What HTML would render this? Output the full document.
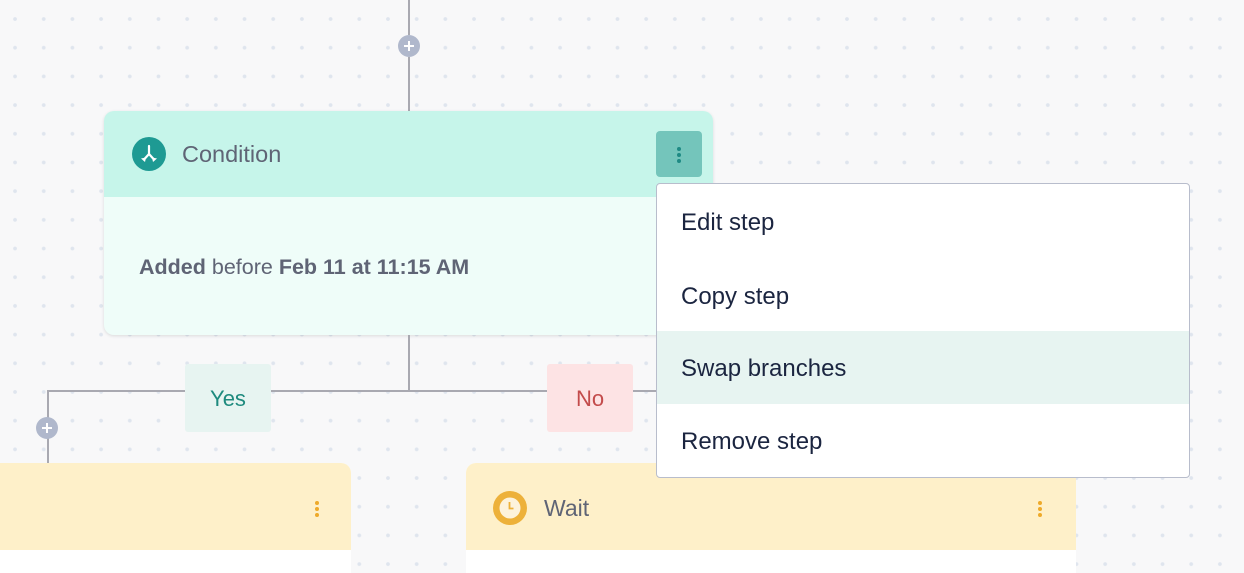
<!DOCTYPE html>
<html><head><meta charset="utf-8"><style>
body{margin:0;width:1244px;height:566px;overflow:hidden;position:relative;font-family:"Liberation Sans",sans-serif;
background-color:#f8f8f9;background-image:radial-gradient(circle,#dfe5ee 1.6px,transparent 2.2px);background-size:28.7px 28.7px;background-position:0.7px 4.7px;}
.a{position:absolute;box-sizing:border-box}
.ln{position:absolute;background:#a9a9b1}
.pl{position:absolute;width:22px;height:22px;border-radius:50%;background:#b0b8cc}
.pl:before{content:"";position:absolute;left:6px;top:10px;width:10px;height:2px;background:#fff}
.pl:after{content:"";position:absolute;left:10px;top:6px;width:2px;height:10px;background:#fff}
</style></head><body>
<div class="ln" style="left:408px;top:0;width:1.5px;height:35px"></div>
<div class="ln" style="left:408px;top:57px;width:1.5px;height:55px"></div>
<div class="pl" style="left:398px;top:35px"></div>

<div class="a" style="left:104px;top:111px;width:609px;height:224px;border-radius:10px;background:#effdf9;box-shadow:0 1px 3px rgba(0,0,0,.12);overflow:hidden">
 <div class="a" style="left:0;top:0;width:100%;height:86px;background:#c6f5ea"></div>
 <svg class="a" style="left:28px;top:26px" width="34" height="34" viewBox="0 0 34 34"><circle cx="17" cy="17" r="17" fill="#1e9a93"/><path d="M17 9v8M17 17l-5 5.5M17 17l5 5.5" stroke="#fff" stroke-width="2.2" fill="none" stroke-linecap="round"/><path d="M9 21.5l4 3.5 1-4.5zM25 21.5l-4 3.5-1-4.5z" fill="#fff"/></svg>
 <div class="a" style="left:78px;top:30px;font-size:23.5px;color:#5f6475">Condition</div>
 <div class="a" style="left:552px;top:20px;width:46px;height:46px;border-radius:4px;background:#74c5bb"></div>
 <div class="a" style="left:573px;top:36px;width:4px;height:4px;border-radius:50%;background:#1e8a84;box-shadow:0 6px 0 #1e8a84,0 12px 0 #1e8a84"></div>
 <div class="a" style="left:35px;top:144px;font-size:21.5px;color:#5f6475"><b>Added</b> before <b>Feb 11 at 11:15 AM</b></div>
</div>

<div class="ln" style="left:408px;top:335px;width:1.5px;height:56px"></div>
<div class="ln" style="left:47px;top:390px;width:610px;height:1.5px;border-radius:0"></div>
<div class="ln" style="left:47px;top:390px;width:1.5px;height:28px"></div>
<div class="ln" style="left:47px;top:438px;width:1.5px;height:26px"></div>
<div class="pl" style="left:36px;top:417px"></div>
<div class="a" style="left:185px;top:364px;width:86px;height:68px;border-radius:3px;background:#e7f4f1;color:#1e8a7e;font-size:22px;line-height:70px;text-align:center">Yes</div>
<div class="a" style="left:547px;top:364px;width:86px;height:68px;border-radius:3px;background:#fde3e4;color:#c34b4b;font-size:22px;line-height:70px;text-align:center">No</div>

<div class="a" style="left:0;top:463px;width:351px;height:110px;border-radius:0 10px 0 0;background:#fff;overflow:hidden">
 <div class="a" style="left:0;top:0;width:100%;height:87px;background:#fef0c9"></div>
 <div class="a" style="left:315px;top:38px;width:4px;height:4px;border-radius:50%;background:#eeaa2a;box-shadow:0 6px 0 #eeaa2a,0 12px 0 #eeaa2a"></div>
</div>
<div class="a" style="left:466px;top:463px;width:610px;height:110px;border-radius:10px 10px 0 0;background:#fff;overflow:hidden">
 <div class="a" style="left:0;top:0;width:100%;height:87px;background:#fef0c9"></div>
 <svg class="a" style="left:27px;top:28px" width="34" height="34" viewBox="0 0 34 34"><circle cx="17" cy="17" r="17" fill="#edb13a"/><circle cx="17" cy="17" r="10.5" fill="#fdf3dc"/><path d="M16.5 11v6.5h4" stroke="#edb13a" stroke-width="1.8" fill="none"/></svg>
 <div class="a" style="left:78px;top:32px;font-size:23px;color:#5f6475">Wait</div>
 <div class="a" style="left:572px;top:38px;width:4px;height:4px;border-radius:50%;background:#eeaa2a;box-shadow:0 6px 0 #eeaa2a,0 12px 0 #eeaa2a"></div>
</div>

<div class="a" style="left:656px;top:183px;width:534px;height:295px;background:#fff;border:1px solid #b8bdcc;border-radius:4px;overflow:hidden;color:#1b2540;font-size:24px">
 <div class="a" style="left:0;top:0;width:100%;height:74px;padding:25px 24px">Edit step</div>
 <div class="a" style="left:0;top:74px;width:100%;height:73px;padding:25px 24px">Copy step</div>
 <div class="a" style="left:0;top:147px;width:100%;height:73px;padding:24px 24px;background:#e7f4f1">Swap branches</div>
 <div class="a" style="left:0;top:220px;width:100%;height:74px;padding:24px 24px">Remove step</div>
</div>
</body></html>
